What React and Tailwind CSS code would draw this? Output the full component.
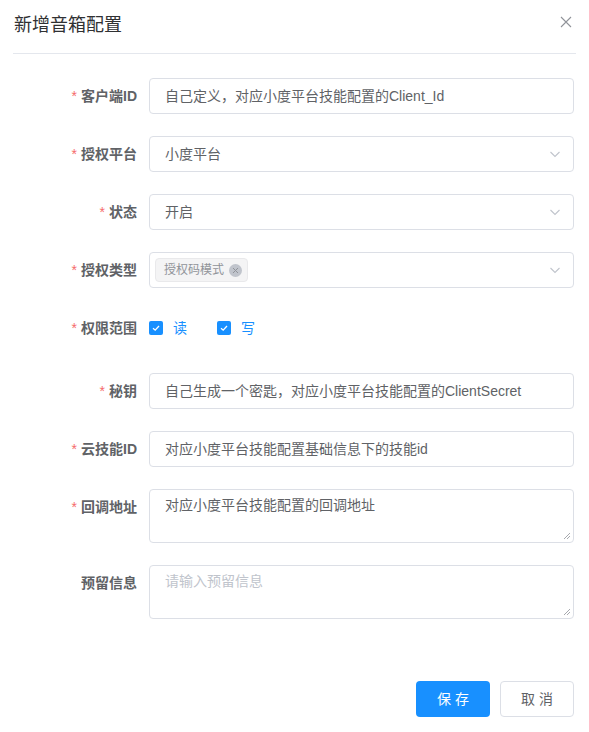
import { useState } from 'react'

// form rows for the speaker config dialog
const FONT = { fontFamily: '"Liberation Sans", "Noto Sans CJK SC", sans-serif' }

function Chevron() {
  return (
    <svg width="12" height="12" viewBox="0 0 12 12" className="absolute right-[12px] top-1/2 -translate-y-1/2">
      <path d="M1.5 4 L6 8.5 L10.5 4" fill="none" stroke="#c0c4cc" strokeWidth="1.1" />
    </svg>
  )
}

function Label({ text, required = true }) {
  return (
    <div className="w-[149px] shrink-0 pr-[12px] text-right text-[14px] font-bold text-[#606266] leading-9 h-9">
      {required && <span className="text-[#f56c6c] mr-[4px] font-normal">*</span>}
      {text}
    </div>
  )
}

function Input({ value, placeholder, select }) {
  return (
    <div className="relative w-[425px] h-9 border border-[#dcdfe6] rounded-[4px] px-[15px] flex items-center text-[14px]">
      {value ? (
        <span className="text-[#606266]">{value}</span>
      ) : (
        <span className="text-[#c0c4cc]">{placeholder}</span>
      )}
      {select && <Chevron />}
    </div>
  )
}

function Textarea({ value, placeholder }) {
  return (
    <div className="relative w-[425px] h-[54px] border border-[#dcdfe6] rounded-[4px] px-[15px] py-[5px] text-[14px] leading-[21px]">
      {value ? (
        <span className="text-[#606266]">{value}</span>
      ) : (
        <span className="text-[#c0c4cc]">{placeholder}</span>
      )}
      <svg width="8" height="8" viewBox="0 0 8 8" className="absolute right-[2px] bottom-[2px]">
        <path d="M7 1 L1 7 M7 4 L4 7" stroke="#909399" strokeWidth="0.8" />
      </svg>
    </div>
  )
}

function Check({ label }) {
  return (
    <div className="flex items-center">
      <span className="w-[14px] h-[14px] rounded-[2px] bg-[#1890ff] flex items-center justify-center">
        <svg width="10" height="10" viewBox="0 0 10 10">
          <path d="M2 5.2 L4.2 7.2 L8 3" fill="none" stroke="white" strokeWidth="1.3" />
        </svg>
      </span>
      <span className="ml-[10px] text-[14px] text-[#1890ff]">{label}</span>
    </div>
  )
}

export default function App() {
  const [perms] = useState(['读', '写'])

  return (
    <div className="w-[589px] h-[732px] bg-white" style={FONT}>
      {/* header */}
      <div className="mx-[13px] h-[54px] border-b border-[#e4e7ed] flex items-start justify-between">
        <span className="mt-[13px] ml-[1px] text-[18px] leading-6 text-[#303133]">新增音箱配置</span>
        <svg width="12" height="12" viewBox="0 0 12 12" className="mt-[16px] mr-[4px]">
          <path d="M1 1 L11 11 M11 1 L1 11" stroke="#909399" strokeWidth="1.1" />
        </svg>
      </div>

      {/* form */}
      <div className="pt-[24px] flex flex-col">
        <div className="flex mb-[22px]">
          <Label text="客户端ID" />
          <Input value="自己定义，对应小度平台技能配置的Client_Id" />
        </div>
        <div className="flex mb-[22px]">
          <Label text="授权平台" />
          <Input value="小度平台" select />
        </div>
        <div className="flex mb-[22px]">
          <Label text="状态" />
          <Input value="开启" select />
        </div>
        <div className="flex mb-[22px]">
          <Label text="授权类型" />
          <div className="relative w-[425px] h-9 border border-[#dcdfe6] rounded-[4px] pl-[5px] flex items-center">
            <span className="h-[24px] pl-[8px] pr-[5px] flex items-center bg-[#f4f4f5] border border-[#e9e9eb] rounded-[4px] text-[12px] text-[#909399]">
              授权码模式
              <span className="ml-[5px] w-[13px] h-[13px] rounded-full bg-[#c0c4cc] flex items-center justify-center">
                <svg width="7" height="7" viewBox="0 0 7 7">
                  <path d="M1 1 L6 6 M6 1 L1 6" stroke="#909399" strokeWidth="1" />
                </svg>
              </span>
            </span>
            <Chevron />
          </div>
        </div>
        <div className="flex h-[41px] mb-[22px]">
          <Label text="权限范围" />
          <div className="flex items-center h-9 gap-[30px]">
            {perms.map((p) => (
              <Check key={p} label={p} />
            ))}
          </div>
        </div>
        <div className="flex mb-[22px]">
          <Label text="秘钥" />
          <Input value="自己生成一个密匙，对应小度平台技能配置的ClientSecret" />
        </div>
        <div className="flex mb-[22px]">
          <Label text="云技能ID" />
          <Input value="对应小度平台技能配置基础信息下的技能id" />
        </div>
        <div className="flex mb-[22px]">
          <Label text="回调地址" />
          <Textarea value="对应小度平台技能配置的回调地址" />
        </div>
        <div className="flex">
          <Label text="预留信息" required={false} />
          <Textarea placeholder="请输入预留信息" />
        </div>
      </div>

      {/* footer */}
      <div className="mt-[62px] mr-[15px] flex justify-end gap-[10px]">
        <button className="w-[74px] h-9 rounded-[4px] bg-[#1890ff] text-white text-[14px] tracking-[4px] pl-[4px]">保存</button>
        <button className="w-[74px] h-9 rounded-[4px] border border-[#dcdfe6] bg-white text-[#606266] text-[14px] tracking-[4px] pl-[4px]">取消</button>
      </div>
    </div>
  )
}
